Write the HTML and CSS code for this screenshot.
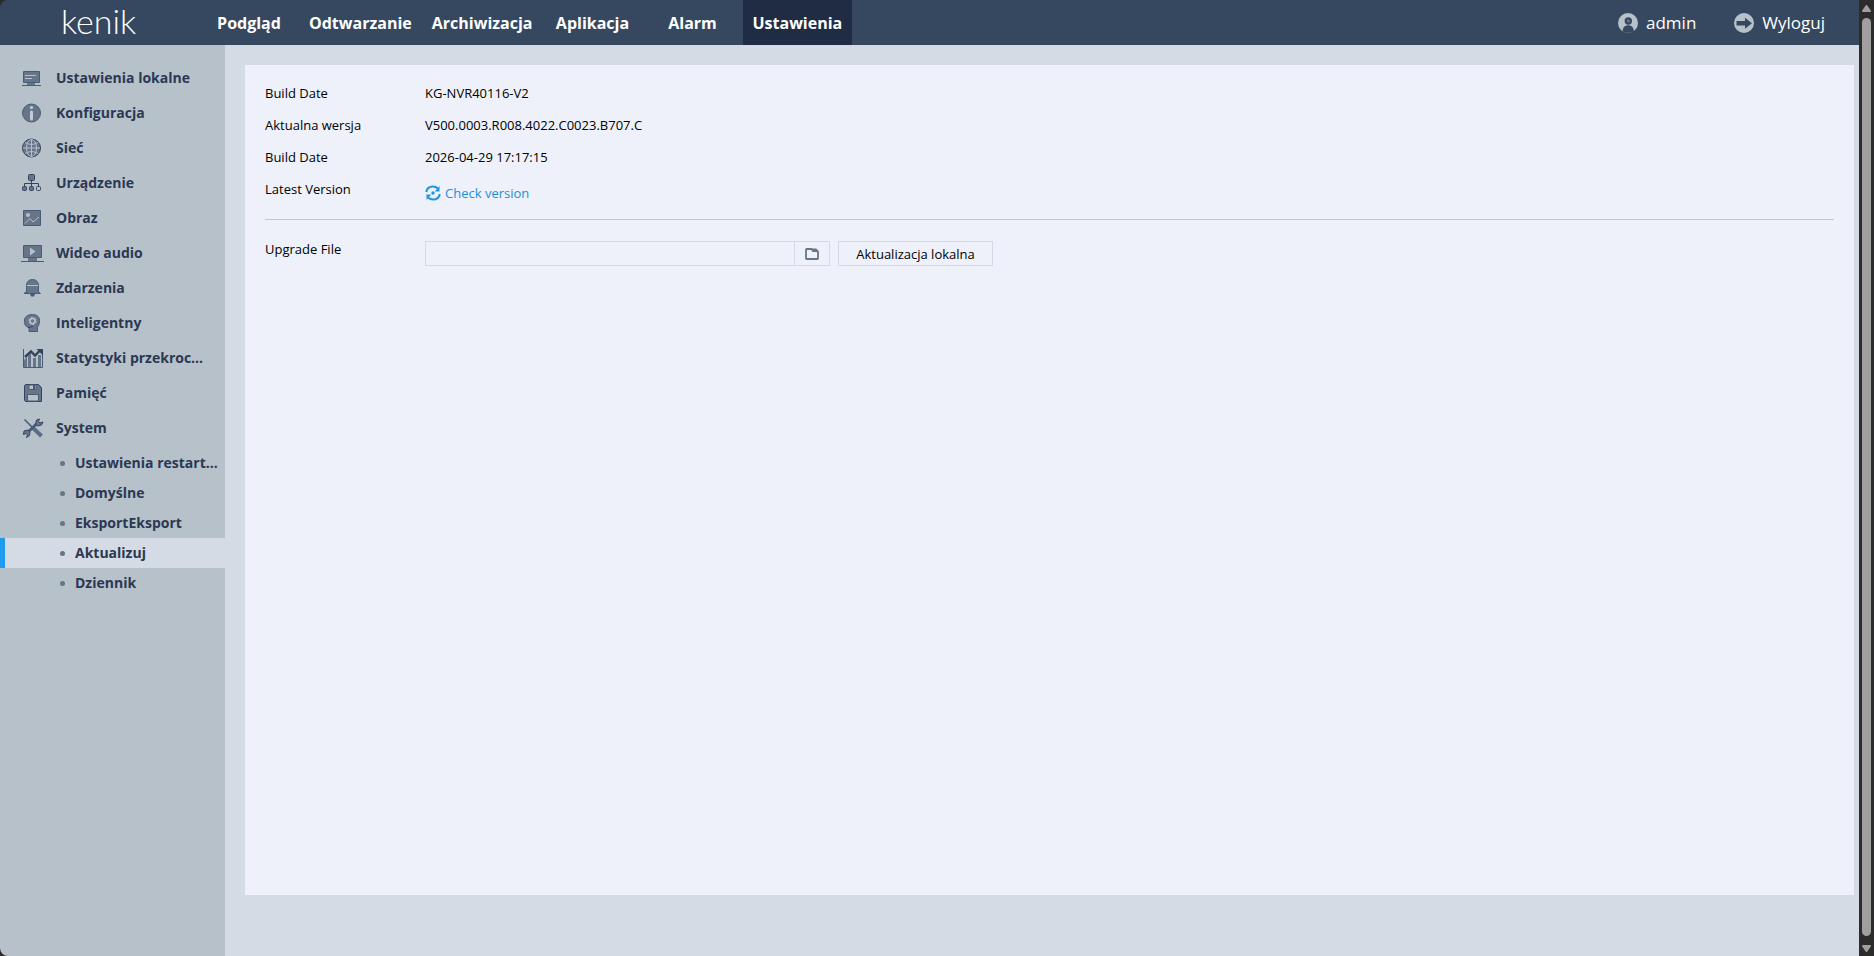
FILE: index.html
```html
<!DOCTYPE html>
<html lang="pl">
<head>
<meta charset="utf-8">
<title>kenik – Aktualizuj</title>
<link rel="stylesheet" href="styles.css">
</head>
<body>
<div class="app">
  <header class="topbar">
    <a class="logo" href="#">kenik</a>
    <nav class="mainnav">
      <a href="#">Podgląd</a>
      <a href="#">Odtwarzanie</a>
      <a href="#">Archiwizacja</a>
      <a href="#">Aplikacja</a>
      <a href="#">Alarm</a>
      <a class="current" href="#">Ustawienia</a>
    </nav>
    <div class="account">
      <a href="#"><svg width="20" height="20" viewBox="0 0 20 20"><circle cx="10" cy="10" r="10" fill="#b7c1ca"/><circle cx="10.300" cy="8" r="3.700" fill="#364860"/><path d="M4.500 18.200c.3-4 2.500-6 5.700-6s5.400 2 5.700 6c-3.500 2-8 2-11.400 0z" fill="#364860"/><circle cx="10.300" cy="8" r="1.500" fill="#66758a"/></svg>admin</a>
      <a href="#"><svg width="20" height="20" viewBox="0 0 20 20"><circle cx="10" cy="10" r="10" fill="#b7c1ca"/><path d="M2.500 8h8.500V4.700l7 5.500-7 5.500v-3.200H2.500z" fill="#364860"/></svg>Wyloguj</a>
    </div>
  </header>
  <div class="body">
    <aside class="sidebar">
      <ul class="menu">
        <li><a href="#"><svg width="24" height="20" viewBox="0 0 24 20"><path d="M2.500 3.500h16v11h-16z" fill="#66758a" stroke="#485c78"/><path d="M4 7.500h11M4 10.500h7" stroke="#b7c1ca"/><path d="M6 15h8v2H6z" fill="#66758a"/><path d="M1 17.500h19" stroke="#485c78"/></svg><span>Ustawienia lokalne</span></a></li>
        <li><a href="#"><svg width="24" height="20" viewBox="0 0 24 20"><circle cx="10.500" cy="10" r="9" fill="#66758a" stroke="#485c78"/><circle cx="10.500" cy="4.500" r="1.600" fill="#c3cad9"/><path d="M10.500 9v7" stroke="#c3cad9" stroke-width="3" stroke-linecap="round"/></svg><span>Konfiguracja</span></a></li>
        <li><a href="#"><svg width="24" height="20" viewBox="0 0 24 20"><circle cx="10.500" cy="10" r="9" fill="#66758a" stroke="#34445e"/><g fill="none" stroke="#b7c1ca"><ellipse cx="10.500" cy="10" rx="5" ry="8.500"/><path d="M10.500 1.500v17M2 10h17M4 4.500c4 2.500 9 2.500 13 0M4 15.500c4-2.500 9-2.500 13 0"/></g></svg><span>Sieć</span></a></li>
        <li><a href="#"><svg width="24" height="20" viewBox="0 0 24 20"><g fill="#66758a" stroke="#34445e"><path fill="none" d="M10.500 8v6M3.500 14v-3.500h14V14"/><rect x="7.500" y="1.500" width="6" height="6" rx="1"/><rect x="1.500" y="13.500" width="4" height="4" rx="1"/><rect x="8.500" y="13.500" width="4" height="4" rx="1"/><rect x="15.500" y="13.500" width="4" height="4" rx="1" fill="#b7c1ca"/></g></svg><span>Urządzenie</span></a></li>
        <li><a href="#"><svg width="24" height="20" viewBox="0 0 24 20"><path d="M2.500 2.500h17v15h-17z" fill="#66758a" stroke="#485c78"/><circle cx="7" cy="7" r="2" fill="#b7c1ca"/><path d="M4 15.500l5-5 3 3.500 6-5" fill="none" stroke="#b7c1ca"/></svg><span>Obraz</span></a></li>
        <li><a href="#"><svg width="24" height="20" viewBox="0 0 24 20"><path d="M2.500 2.500h18v12h-18z" fill="#66758a" stroke="#485c78"/><path d="M9 4.500l5.500 4-5.500 4z" fill="#b7c1ca"/><path d="M7 15h9v3H7z" fill="#66758a"/><path d="M0 18.500h23" stroke="#485c78"/></svg><span>Wideo audio</span></a></li>
        <li><a href="#"><svg width="24" height="20" viewBox="0 0 24 20"><path d="M5.500 15.500V7.500C5.500 4 8 1.500 11.500 1.500s6 2.500 6 6v6l2 2H3l2.500-2z" fill="#66758a" stroke="#485c78"/><path d="M6 7.500h11" stroke="#b7c1ca"/><path d="M9 16h5l-1 2.500h-3z" fill="#485c78"/></svg><span>Zdarzenia</span></a></li>
        <li><a href="#"><svg width="24" height="20" viewBox="0 0 24 20"><path d="M8 18.500v-4C4.500 14 3 11 3.500 7c.5-4 4-5.500 8-5.500 5 0 7.500 3 7 7.500-.2 2.500-1.500 4-2 5.500v4z" fill="#66758a" stroke="#485c78"/><circle cx="11.500" cy="8" r="2.600" fill="none" stroke="#b7c1ca" stroke-width="1.600"/><circle cx="11.500" cy="8" r="3.700" fill="none" stroke="#b7c1ca" stroke-dasharray="1.900 1.970"/><path d="M7 14.500l5-1" stroke="#34445e"/></svg><span>Inteligentny</span></a></li>
        <li><a href="#"><svg width="24" height="20" viewBox="0 0 24 20"><path d="M3 12l3-3v11H3zM7 8l3-3 0 15H7zM12 10h3v10h-3zM17 7h3v13h-3z" fill="#66758a"/><path d="M2.500 1v18.500h19V5" fill="none" stroke="#485c78"/><path d="M4 9l6-5.500 4 4 5-5" fill="none" stroke="#34445e" stroke-width="2.400"/><path d="M15.500 1H22v6.500z" fill="#34445e"/></svg><span>Statystyki przekroc...</span></a></li>
        <li><a href="#"><svg width="24" height="20" viewBox="0 0 24 20"><path d="M4.500 1.500h13l3 3v14h-16l-1-1v-15z" fill="#66758a" stroke="#34445e"/><path d="M8 2h7v4.500H8zM6.500 11.500h11V18h-11z" fill="#b7c1ca" stroke="#485c78"/><path d="M12 2h2v4h-2z" fill="#485c78"/></svg><span>Pamięć</span></a></li>
        <li><a href="#"><svg width="24" height="20" viewBox="0 0 24 20"><path d="M3.500 1.500l9 9" stroke="#485c78" stroke-width="1.600"/><path d="M12 10l8.500 8" stroke="#5a6d88" stroke-width="4"/><path d="M6.500 14.500l10-9.500" stroke="#485c78" stroke-width="3"/><path d="M18.500 1l-3 1-1 4 2 2 4-1 1.500-3-3 1-1.500-1.500zM5.500 19.500l3-2 .5-3.500-2-2-4 1-.5 3.500 2.500-1 1.500 1.500z" fill="#66758a" stroke="#34445e"/></svg><span>System</span></a>
          <ul class="submenu">
            <li><a href="#"><span>Ustawienia restart...</span></a></li>
            <li><a href="#"><span>Domyślne</span></a></li>
            <li><a href="#"><span>EksportEksport</span></a></li>
            <li><a class="current" href="#"><span>Aktualizuj</span></a></li>
            <li><a href="#"><span>Dziennik</span></a></li>
          </ul>
        </li>
      </ul>
    </aside>
    <main class="content">
      <section class="panel">
        <dl class="info">
          <dt>Build Date</dt><dd>KG-NVR40116-V2</dd>
          <dt>Aktualna wersja</dt><dd>V500.0003.R008.4022.C0023.B707.C</dd>
          <dt>Build Date</dt><dd>2026-04-29 17:17:15</dd>
          <dt>Latest Version</dt>
          <dd class="check"><a href="#"><svg width="16" height="16" viewBox="0 0 16 16"><g fill="none" stroke="#1e96e3" stroke-width="2"><path d="M1.200 7C1.800 3.500 4.500 1.500 8 1.500c2 0 3.600.8 4.800 2M14.800 9c-.6 3.500-3.300 5.500-6.800 5.500-2 0-3.600-.8-4.800-2"/></g><path d="M14.500 1v5.500H9.800zM1.500 15V9.500h4.700z" fill="#1e96e3"/><circle cx="8" cy="8" r="1.700" fill="#1e96e3"/></svg>Check version</a></dd>
        </dl>
        <form class="upgrade">
          <label for="file">Upgrade File</label>
          <div class="picker">
            <input id="file" type="text">
            <button class="browse" type="button" aria-label="Przeglądaj"><svg width="14" height="12" viewBox="0 0 14 12"><path d="M1.700 1h4.800l1.500 2h4.300q.7 0 .7.700v6.600q0 .7-.7.700H1.700q-.7 0-.7-.7V1.700Q1 1 1.700 1z" fill="none" stroke="#66758a" stroke-width="1.800"/><path d="M7 .5h4q1.500 0 2 3H8.500z" fill="#66758a"/></svg></button>
          </div>
          <button class="local" type="button">Aktualizacja lokalna</button>
        </form>
      </section>
    </main>
  </div>
</div>
<div class="scrollbar" aria-hidden="true">
  <svg width="9" height="7" viewBox="0 0 9 7"><path d="M4.500 1L8 6H1z" fill="#9f9f9f" stroke="#9f9f9f" stroke-linejoin="round" stroke-width="2"/></svg>
  <div class="thumb"></div>
  <svg width="9" height="7" viewBox="0 0 9 7"><path d="M4.500 6L8 1H1z" fill="#9f9f9f" stroke="#9f9f9f" stroke-linejoin="round" stroke-width="2"/></svg>
</div>
</body>
</html>
```
FILE: styles.css
```css
* { box-sizing: border-box; }

body {
  margin: 0;
  min-height: 100vh;
  display: flex;
  background: #2c2a2a;
  font: 13px/20px "Open Sans", "Noto Sans", sans-serif;
  color: #000;
}

a { color: inherit; text-decoration: none; }
ul, dl, dd { margin: 0; padding: 0; list-style: none; }
svg { display: block; flex: none; }
input, button { font: inherit; color: inherit; margin: 0; }

.app {
  flex: 1;
  min-width: 0;
  display: flex;
  flex-direction: column;
  border-radius: 8px 0 0 8px;
  overflow: hidden;
}

.topbar {
  display: flex;
  height: 45px;
  background: #364860;
  color: #fff;
}

.logo {
  width: 199px;
  padding-left: 61px;
  font: 300 34px/42px Lato, sans-serif;
}

.mainnav { display: flex; }
.mainnav a {
  min-width: 100px;
  padding: 0 10px;
  font-size: 16px;
  line-height: 46px;
  font-weight: 700;
  text-align: center;
}
.mainnav .current { background: #1f2c44; }

.account {
  display: flex;
  gap: 38px;
  margin-left: auto;
  padding-right: 34px;
  font-size: 17px;
}
.account a { display: flex; align-items: center; gap: 8px; }

.body { flex: 1; display: flex; }

.sidebar {
  width: 225px;
  flex: none;
  padding-top: 15px;
  background: #b7c1ca;
  color: #2b3853;
  font-size: 14px;
  font-weight: 700;
}
.menu a { display: flex; align-items: center; height: 35px; padding-left: 21px; gap: 11px; }
.menu span { white-space: nowrap; }

.submenu { padding-top: 3px; }
.submenu a { height: 30px; padding-left: 55px; gap: 10px; border-left: 5px solid transparent; }
.submenu a::before {
  content: "";
  width: 5px;
  height: 5px;
  flex: none;
  border-radius: 50%;
  background: #66758a;
}
.submenu .current { background: #d4dbe4; border-left-color: #1f9cf0; }

.content {
  flex: 1;
  display: flex;
  padding: 20px 5px 61px 20px;
  background: #d4dbe4;
}
.panel { flex: 1; padding: 12px 20px; background: #eef1f9; }

.info {
  display: grid;
  grid-template-columns: 160px 1fr;
  line-height: 32px;
  padding-bottom: 14px;
  border-bottom: 1px solid #bfc5d2;
}
.check { padding-top: 4px; margin-bottom: -4px; color: #1a8fdc; }
.check a { display: flex; width: max-content; align-items: center; gap: 4px; }

.upgrade { display: flex; align-items: center; padding-top: 21px; }
.upgrade label { width: 160px; align-self: flex-start; line-height: 16px; }
.picker { display: flex; margin-right: 8px; }
.picker input {
  width: 370px;
  height: 25px;
  padding: 0 8px;
  border: 1px solid #d4dae4;
  background: transparent;
}
.browse, .local { height: 25px; padding: 0; border: 1px solid #d4dae4; background: transparent; }
.browse { width: 35px; border-left: 0; display: flex; align-items: center; justify-content: center; }
.local { width: 155px; }

.scrollbar {
  width: 15px;
  padding: 5px 3px 4px;
  display: flex;
  flex-direction: column;
  gap: 6px;
  align-items: flex-start;
  background: #2c2c2c;
}
.scrollbar svg:last-child { margin-top: 3px; }
.thumb { flex: 1; width: 9px; border-radius: 5px; background: #9f9f9f; }
```
